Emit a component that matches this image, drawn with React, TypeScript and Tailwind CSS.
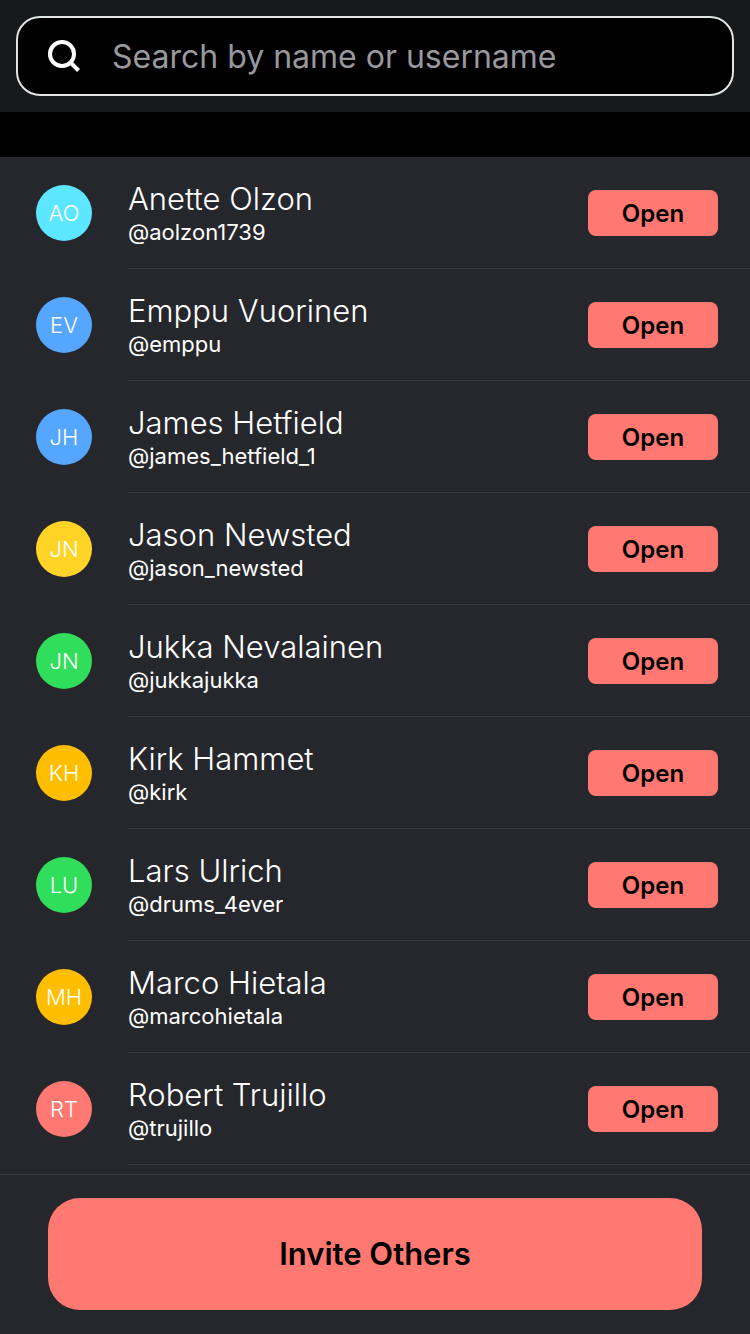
type Contact = { initials: string; name: string; handle: string; color: string };

const contacts: Contact[] = [
  { initials: "AO", name: "Anette Olzon", handle: "@aolzon1739", color: "bg-[#5ce6ff]" },
  { initials: "EV", name: "Emppu Vuorinen", handle: "@emppu", color: "bg-[#54a6ff]" },
  { initials: "JH", name: "James Hetfield", handle: "@james_hetfield_1", color: "bg-[#54a6ff]" },
  { initials: "JN", name: "Jason Newsted", handle: "@jason_newsted", color: "bg-[#ffd426]" },
  { initials: "JN", name: "Jukka Nevalainen", handle: "@jukkajukka", color: "bg-[#31de5b]" },
  { initials: "KH", name: "Kirk Hammet", handle: "@kirk", color: "bg-[#ffbf00]" },
  { initials: "LU", name: "Lars Ulrich", handle: "@drums_4ever", color: "bg-[#31de5b]" },
  { initials: "MH", name: "Marco Hietala", handle: "@marcohietala", color: "bg-[#ffbf00]" },
  { initials: "RT", name: "Robert Trujillo", handle: "@trujillo", color: "bg-[#ff7871]" },
];

function ContactRow({ contact }: { contact: Contact }) {
  return (
    <li className="flex h-28 items-center pl-9">
      <div
        aria-hidden="true"
        className={`flex size-14 shrink-0 items-center justify-center rounded-full text-[22px] font-light ${contact.color}`}
      >
        {contact.initials}
      </div>
      <div className="ml-9 flex h-28 min-w-0 flex-1 items-center justify-between border-b border-[#3a3b3f] pr-8">
        <div className="min-w-0">
          <p className="truncate text-[31px] leading-[38px] font-light">{contact.name}</p>
          <p className="truncate text-[22px] leading-7">{contact.handle}</p>
        </div>
        <button
          type="button"
          aria-label={`Open ${contact.name}`}
          className="h-[46px] w-[130px] shrink-0 rounded-lg bg-[#ff7871] pt-0.5 text-2xl font-semibold text-black"
        >
          Open
        </button>
      </div>
    </li>
  );
}

export default function App() {
  return (
    <div className="flex h-screen flex-col bg-[#26272c] font-['Inter',sans-serif] text-white [font-variant-ligatures:none]">
      <header className="bg-[#17191a] p-4">
        <label className="flex h-20 items-center gap-8 rounded-3xl border-2 border-[#e0e4e4] bg-black px-[30px]">
          <svg viewBox="0 0 32 32" className="size-8 shrink-0" fill="none" stroke="currentColor" strokeWidth="4" aria-hidden="true">
            <circle cx="14" cy="14" r="12" />
            <path d="M22.5 22.5l8 8" />
          </svg>
          <input
            type="text"
            aria-label="Search by name or username"
            placeholder="Search by name or username"
            className="min-w-0 flex-1 bg-transparent pt-0.5 text-[32px] outline-none placeholder:text-[#98989f]"
          />
        </label>
      </header>
      <div className="h-[45px] shrink-0 bg-black" />
      <ul className="min-h-0 flex-1 overflow-hidden">
        {contacts.map((contact) => (
          <ContactRow key={contact.handle} contact={contact} />
        ))}
      </ul>
      <footer className="border-t border-[#3a3b3f] px-12 pt-[23px] pb-6">
        <button type="button" className="h-28 w-full rounded-[32px] bg-[#ff7871] text-[31px] font-semibold text-black">
          Invite Others
        </button>
      </footer>
    </div>
  );
}
